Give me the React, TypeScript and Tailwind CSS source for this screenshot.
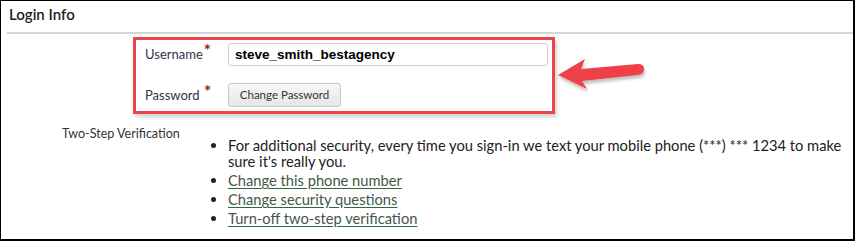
import React from 'react'

const font = { fontFamily: 'Lato, "Open Sans", sans-serif' }

function Arrow() {
  return (
    <svg
      className="absolute left-[550px] top-[50px]"
      width="100"
      height="45"
      viewBox="550 50 100 45"
    >
      <defs>
        <filter id="shadow" x="-20%" y="-30%" width="140%" height="170%">
          <feDropShadow dx="1" dy="3" stdDeviation="1.6" floodColor="#000" floodOpacity="0.25" />
        </filter>
      </defs>
      <path
        d="M557,74 L584,58 L580,68 L637,63 Q643,63 643,68 Q643,73 637,74 L581,80 L586,88 Z"
        fill="#ee3f47"
        filter="url(#shadow)"
      />
    </svg>
  )
}

function Required() {
  return (
    <span className="text-[#8e1c1c] text-[17px] font-bold relative top-[-2px] ml-[1px] leading-none">
      *
    </span>
  )
}

function LinkItem({ children }: { children: React.ReactNode }) {
  return (
    <li className="mt-[3px]">
      <a
        href="#"
        className="text-[#45574a] underline decoration-[#2d6b3c] underline-offset-[2px]"
      >
        {children}
      </a>
    </li>
  )
}

export default function App() {
  return (
    <div
      className="relative w-[855px] h-[241px] overflow-hidden bg-white border border-black border-r-2 border-b-2"
      style={font}
    >
      <div className="ml-[6px] pl-[2px] h-[33px] border-b-2 border-[#d3d7d6] flex items-center">
        <h2 className="text-[15px] font-semibold text-[#222] -mt-[4px]">Login Info</h2>
      </div>

      <div className="ml-[132px] mt-[3px] w-[422px] h-[77px] border-[3px] border-[#ec4449] shadow-[2px_3px_4px_rgba(0,0,0,0.18)] pl-[9px] pt-[3px]">
        <div className="flex items-center h-[23px]">
          <label className="w-[83px] text-[13px] text-[#33334a] -mt-[1px]">
            Username
            <Required />
          </label>
          <input
            readOnly
            value="steve_smith_bestagency"
            className="w-[320px] h-[23px] border border-[#cfcfcf] rounded-[3px] px-[6px] text-[13.5px] font-bold text-black outline-none"
            style={{ fontFamily: '"Liberation Sans", Arial, sans-serif' }}
          />
        </div>
        <div className="flex items-center h-[24px] mt-[17px]">
          <label className="w-[83px] text-[13px] text-[#33334a]">
            Password <Required />
          </label>
          <button className="w-[113px] h-[24px] border border-[#c8c8c8] rounded-[3px] bg-gradient-to-b from-[#f7f7f7] to-[#e6e6e6] text-[11.5px] text-[#333]">
            Change Password
          </button>
        </div>
      </div>

      <Arrow />

      <div className="flex mt-[11px]">
        <div className="ml-[61px] w-[150px] text-[12.5px] text-[#333]">Two-Step Verification</div>
        <ul className="list-disc pl-[16px] mt-[12px] w-[640px] text-[14.7px] leading-[16px] text-[#222]">
          <li>
            For additional security, every time you sign-in we text your mobile phone (***) *** 1234 to make
            sure it's really you.
          </li>
          <LinkItem>Change this phone number</LinkItem>
          <LinkItem>Change security questions</LinkItem>
          <LinkItem>Turn-off two-step verification</LinkItem>
        </ul>
      </div>
    </div>
  )
}
